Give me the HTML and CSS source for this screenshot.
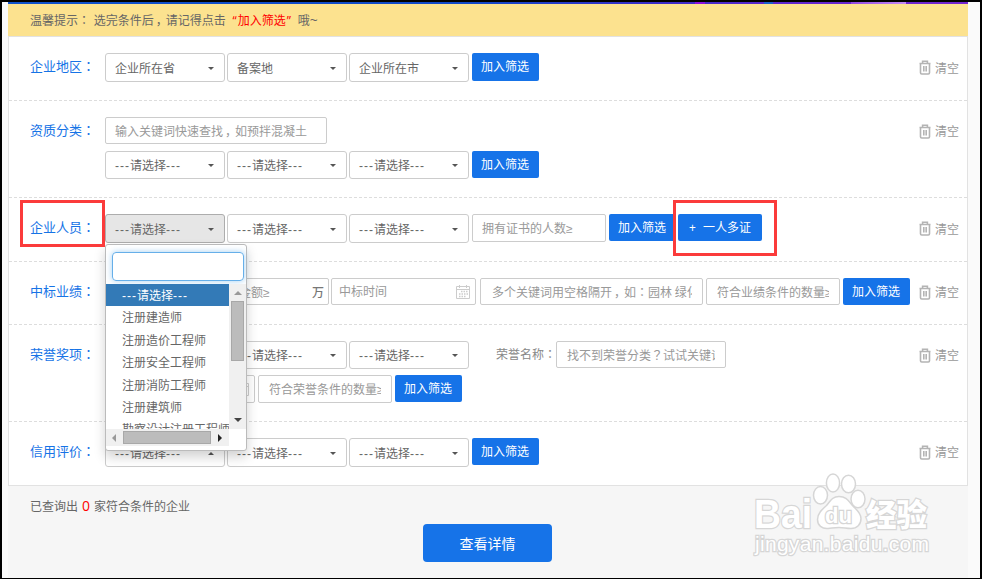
FILE: index.html
```html
<!DOCTYPE html>
<html lang="zh-CN">
<head>
<meta charset="utf-8">
<title>企业查询</title>
<link rel="stylesheet" href="styles.css">
</head>
<body>
<svg class="defs" width="0" height="0" aria-hidden="true">
  <symbol id="trash" viewBox="0 0 12 15">
    <path d="M0.500 3.500h11M3.600 3V1.200h4.800V3M1.500 4v8.800q0 1.200 1.200 1.200h6.600q1.200 0 1.200-1.200V4M4.800 6v5.500M7.200 6v5.500" fill="none" stroke="#b4b4b4" stroke-width="1.600"/>
  </symbol>
  <symbol id="calendar" viewBox="0 0 14 14">
    <path d="M.5 1.500h13v12H.5zM.5 4.500h13M3.500 0v3M10.500 0v3" fill="none" stroke="#ccc"/>
    <path d="M5 6.500h7M3 9h9M3 11.500h7" stroke="#ccc" stroke-width="1.500" stroke-dasharray="1.500 1"/>
  </symbol>
</svg>
<div class="frame">
  <div class="page">
    <div class="strip"><i class="mark a"></i><i class="mark b"></i><i class="mark c"></i></div>
    <div class="tip">温馨提示<span class="p" lang="zh-TW">：</span> 选完条件后<span class="comma">，</span>请记得点击<span class="hot"><q>“</q>加入筛选<q class="end">”</q></span>哦<span class="tilde">~</span></div>
    <div class="panel">
      <div class="row">
        <div class="label">企业地区<span class="p" lang="zh-TW">：</span></div>
        <div class="lines"><div class="line">
          <div class="select">企业所在省</div><div class="select">备案地</div><div class="select">企业所在市</div><div class="btn big">加入筛选</div>
        </div></div>
        <div class="clear"><svg><use href="#trash"/></svg>清空</div>
      </div>
      <div class="row tall">
        <div class="label">资质分类<span class="p" lang="zh-TW">：</span></div>
        <div class="lines">
          <div class="line"><div class="input w222"><span>输入关键词快速查找<span class="comma">，</span>如预拌混凝土</span></div></div>
          <div class="line">
            <div class="select short"><s>---</s>请选择<s>---</s></div><div class="select short"><s>---</s>请选择<s>---</s></div><div class="select short"><s>---</s>请选择<s>---</s></div><div class="btn">加入筛选</div>
          </div>
        </div>
        <div class="clear"><svg><use href="#trash"/></svg>清空</div>
      </div>
      <div class="row">
        <div class="label">企业人员<span class="p" lang="zh-TW">：</span></div>
        <div class="lines"><div class="line">
          <div class="select open"><s>---</s>请选择<s>---</s></div><div class="select"><s>---</s>请选择<s>---</s></div><div class="select"><s>---</s>请选择<s>---</s></div><div class="input w134 people"><span>拥有证书的人数<span class="ge">≥</span></span></div><div class="btn">加入筛选</div><div class="btn multi"><span class="plus">+</span>一人多证</div>
        </div></div>
        <div class="clear"><svg><use href="#trash"/></svg>清空</div>
      </div>
      <div class="row small">
        <div class="label">中标业绩<span class="p" lang="zh-TW">：</span></div>
        <div class="lines"><div class="line">
          <div class="input place"></div><div class="input amount"><span>金额<span class="ge">≥</span></span><b>万</b></div><div class="input date"><span>中标时间</span><svg><use href="#calendar"/></svg></div><div class="input words"><span>多个关键词用空格隔开<span class="comma">，</span>如<span class="p" lang="zh-TW">：</span>园林 绿化</span></div><div class="input w134 count"><span>符合业绩条件的数量<span class="ge">≥</span></span></div><div class="btn">加入筛选</div>
        </div></div>
        <div class="clear"><svg><use href="#trash"/></svg>清空</div>
      </div>
      <div class="row tall">
        <div class="label">荣誉奖项<span class="p" lang="zh-TW">：</span></div>
        <div class="lines">
          <div class="line">
            <div class="select short"></div><div class="select short"><s>---</s>请选择<s>---</s></div><div class="select short"><s>---</s>请选择<s>---</s></div><div class="honor">荣誉名称<span class="p" lang="zh-TW">：</span></div><div class="input w170"><span>找不到荣誉分类<span class="p" lang="zh-TW">？</span>试试关键词</span></div>
          </div>
          <div class="line">
            <div class="input date wide"><svg><use href="#calendar"/></svg></div><div class="input w134 count short"><span>符合荣誉条件的数量<span class="ge">≥</span></span></div><div class="btn">加入筛选</div>
          </div>
        </div>
        <div class="clear"><svg><use href="#trash"/></svg>清空</div>
      </div>
      <div class="row small last">
        <div class="label">信用评价<span class="p" lang="zh-TW">：</span></div>
        <div class="lines"><div class="line">
          <div class="select up"><s>---</s>请选择<s>---</s></div><div class="select"><s>---</s>请选择<s>---</s></div><div class="select"><s>---</s>请选择<s>---</s></div><div class="btn">加入筛选</div>
        </div></div>
        <div class="clear"><svg><use href="#trash"/></svg>清空</div>
      </div>
    </div>
    <div class="result">已查询出<em>0</em>家符合条件的企业</div>
    <div class="submit">查看详情</div>
  </div>

  <div class="dropdown">
    <div class="search"></div>
    <div class="listbox">
      <div class="items">
        <div class="item on"><s>---</s>请选择<s>---</s></div>
        <div class="item">注册建造师</div>
        <div class="item">注册造价工程师</div>
        <div class="item">注册安全工程师</div>
        <div class="item">注册消防工程师</div>
        <div class="item">注册建筑师</div>
        <div class="item">勘察设计注册工程师</div>
      </div>
      <div class="vbar"><i class="arrow n"></i><i class="thumb"></i><i class="arrow s"></i></div>
    </div>
    <div class="hbar"><i class="arrow w"></i><i class="thumb"></i><i class="arrow e"></i></div>
  </div>
  <div class="outline people-label"></div>
  <div class="outline people-multi"></div>

  <svg class="watermark" width="190" height="92" viewBox="748 470 190 92">
    <g fill="#fff" stroke="#d6d6d6" stroke-width="1.500">
      <ellipse cx="820.500" cy="495.300" rx="7" ry="8.700"/>
      <ellipse cx="833" cy="483" rx="6.600" ry="9"/>
      <ellipse cx="848.500" cy="484" rx="7" ry="8.800"/>
      <ellipse cx="858" cy="499" rx="7" ry="8.800"/>
      <path d="M839 496.500c-7 0-9 5-12.500 9-4.500 4-9 8-9 14 0 6 4.500 9.500 10.500 9 5-.5 6-1 11-1s7 1 12 1c6 0 10-4 10-10 0-6-5-9-8.500-13-3.500-4-6-9-13.500-9z"/>
      <text x="754" y="528" class="wm-bai" textLength="58" lengthAdjust="spacingAndGlyphs">Bai</text>
      <text x="825" y="523" class="wm-du" textLength="27" lengthAdjust="spacingAndGlyphs">du</text>
      <text x="866" y="526" class="wm-cn" textLength="61" lengthAdjust="spacingAndGlyphs">经验</text>
      <text x="755" y="551" class="wm-url" textLength="174" lengthAdjust="spacing">jingyan.baidu.com</text>
    </g>
  </svg>
</div>
</body>
</html>
```
FILE: styles.css
```css
* { box-sizing: border-box; }
body {
  margin: 0;
  font: 12px/18px "Noto Sans CJK SC", sans-serif;
  color: #666;
  background: #fafafa;
}
.defs { position: absolute; }
s { text-decoration: none; font-family: "Liberation Sans", sans-serif; letter-spacing: 1px; }
q { quotes: none; display: inline-block; width: 12px; padding-right: 1px; text-align: right; font-family: "Open Sans", sans-serif; }
q.end { text-align: left; padding: 0 0 0 1px; }
q::before, q::after { content: none; }
i, em { font-style: normal; }
.p { font-family: "Noto Sans CJK TC", sans-serif; }
.comma { margin: 0 -2px 0 2px; }
.ge { font-family: "Liberation Sans", sans-serif; }

.frame {
  position: relative;
  width: 982px;
  height: 579px;
  border: 2px solid #000;
  border-bottom-width: 1px;
  overflow: hidden;
}
.page { margin: 0 12px 0 6px; width: 960px; height: 576px; background: #f6f6f6; }
.strip { height: 2px; position: relative; background: linear-gradient(90deg, #1052cc 0, #1148c8 48%, #3b2bc8 68%, #6425cf 83%, #7425d0 100%); }
.mark { position: absolute; top: 0; height: 2px; }
.mark.a { left: 687px; width: 10px; background: #8a10e0; }
.mark.b { left: 756px; width: 9px; background: #1a60cc; }
.mark.c { left: 843px; width: 55px; background: linear-gradient(90deg, #9148e2, #c48af5); }
.tip { height: 32px; padding: 0 22px; line-height: 31px; background: #fce28f; white-space: nowrap; word-spacing: 1px; }
.hot { color: #f00; }
.tilde { font-family: "Open Sans", sans-serif; font-size: 14px; }

.panel { border: 1px solid #e2e2e2; background: #fff; }
.row { display: flex; align-items: flex-start; height: 64px; padding: 16px 8px 0 21px; border-bottom: 1px dashed #ddd; }
.row.tall { height: 97px; }
.row.small { height: 63px; }
.row.last { border-bottom: 0; }
.label { width: 75px; flex: none; font-size: 13px; line-height: 26px; color: #1673e6; white-space: nowrap; }
.lines { flex: 1; display: flex; flex-direction: column; gap: 7px; min-width: 0; }
.line { display: flex; align-items: flex-start; height: 27px; white-space: nowrap; }
.clear { flex: none; display: flex; gap: 4px; font-size: 12px; line-height: 29px; color: #999; margin-left: -60px; }
.row.tall .clear, .row.small .clear { line-height: 28px; }
.clear svg { width: 12px; height: 15px; margin-top: 7px; }

.select { position: relative; width: 120px; height: 29px; margin-right: 2px; flex: none; padding-left: 9px; line-height: 27px; border: 1px solid #ccc; border-radius: 3px; background: #fff; }
.select.short { height: 28px; line-height: 26px; }
.select::after { content: ""; position: absolute; right: 10px; top: 13px; border: 3px solid transparent; border-top-color: #555; border-bottom: 0; }
.select.short::after { top: 12px; }
.select.up::after { border-top: 0; border-bottom: 3px solid #555; }
.select.open { background: #e6e6e6; border-color: #adadad; }
.btn { width: 67px; height: 27px; flex: none; margin-left: 1px; line-height: 26px; padding-right: 1px; text-align: center; color: #fff; background: #1673e8; border-radius: 2px; }
.btn.big { height: 28px; }
.input + .btn { margin-left: 3px; }
.btn.multi { width: 84px; margin-left: 2px; padding: 0; }
.plus { display: inline-block; width: 14px; text-align: left; font-family: "Open Sans", sans-serif; }
.input { height: 27px; flex: none; padding: 0 10px 0 9px; line-height: 25px; color: #999; border: 1px solid #ccc; border-radius: 2px; background: #fff; }
.input > span { display: block; overflow: hidden; }
.w222 { width: 222px; }
.w134 { width: 134px; }
.w170 { width: 170px; padding-left: 10px; }
.people { height: 28px; margin-left: 1px; }
.place { width: 96px; margin-right: 2px; }
.amount { display: flex; justify-content: space-between; width: 126px; margin-right: 2px; padding: 0 4px 0 35px; }
.amount b { color: #777; font-weight: 500; }
.date { display: flex; justify-content: space-between; width: 145px; margin-right: 4px; padding: 0 5px 0 7px; }
.date > span { line-height: 24px; }
.date svg { width: 14px; height: 14px; margin-top: 6px; }
.date.wide { width: 150px; height: 28px; margin-right: 3px; justify-content: flex-end; }
.words { width: 223px; margin-right: 3px; padding-left: 11px; }
.count { padding-left: 10px; }
.count.short { height: 28px; line-height: 26px; }
.honor { width: 60px; margin-left: 25px; line-height: 26px; color: #888; }

.result { padding-left: 22px; margin-top: 10px; line-height: 20px; }
.result em { display: inline-block; width: 16px; text-align: center; color: #f00; font: 14px/18px "Open Sans", sans-serif; }
.submit { width: 129px; height: 38px; margin: 8px 0 0 415px; line-height: 38px; font-size: 14px; color: #fff; text-align: center; border-radius: 4px; background: #1673e8; }

.dropdown { position: absolute; left: 103px; top: 242px; width: 142px; height: 207px; border: 1px solid #bbb; border-radius: 3px; background: #fff; box-shadow: 0 6px 12px rgba(0,0,0,.18); }
.search { width: 132px; height: 29px; margin: 7px 0 3px 6px; border: 1px solid #66afe9; border-radius: 4px; box-shadow: 0 0 6px rgba(102,175,233,.6); }
.listbox { display: flex; height: 145px; }
.items { width: 123px; overflow: hidden; }
.item { height: 22.4px; padding-left: 16px; line-height: 22px; white-space: nowrap; }
.item.on { color: #fff; background: #337ab7; }
.vbar { width: 17px; display: flex; flex-direction: column; align-items: center; background: #f0f0f0; }
.vbar .n { margin: 7px 0 6px; }
.vbar .thumb { width: 13px; height: 60px; background: #bcbcbc; border: 1px solid #a8a8a8; }
.vbar .s { margin-top: 57px; }
.hbar { width: 123px; height: 17px; display: flex; align-items: center; background: #f0f0f0; }
.hbar .thumb { width: 88px; height: 13px; background: #bcbcbc; border: 1px solid #a8a8a8; }
.arrow { border: 4px solid transparent; }
.arrow.n { border-top: 0; border-bottom-color: #999; }
.arrow.s { border-bottom: 0; border-top-color: #444; }
.arrow.w { margin: 0 7px 0 6px; border-left: 0; border-right-color: #999; }
.arrow.e { margin-left: 7px; border-right: 0; border-left-color: #222; }

.outline { position: absolute; border: 3px solid #fb3b3b; }
.people-label { left: 18px; top: 198px; width: 85px; height: 47px; }
.people-multi { left: 671px; top: 198px; width: 104px; height: 56px; }

.watermark { position: absolute; left: 746px; top: 468px; }
.watermark text { paint-order: stroke; stroke-width: 2.5px; }
.wm-bai { font: bold 41px "Liberation Sans", sans-serif; }
.wm-du { font: bold 22px "Liberation Sans", sans-serif; }
.wm-cn { font: 900 31px "Noto Sans CJK SC", sans-serif; }
.wm-url { font: 21px "Liberation Sans", sans-serif; }
```
